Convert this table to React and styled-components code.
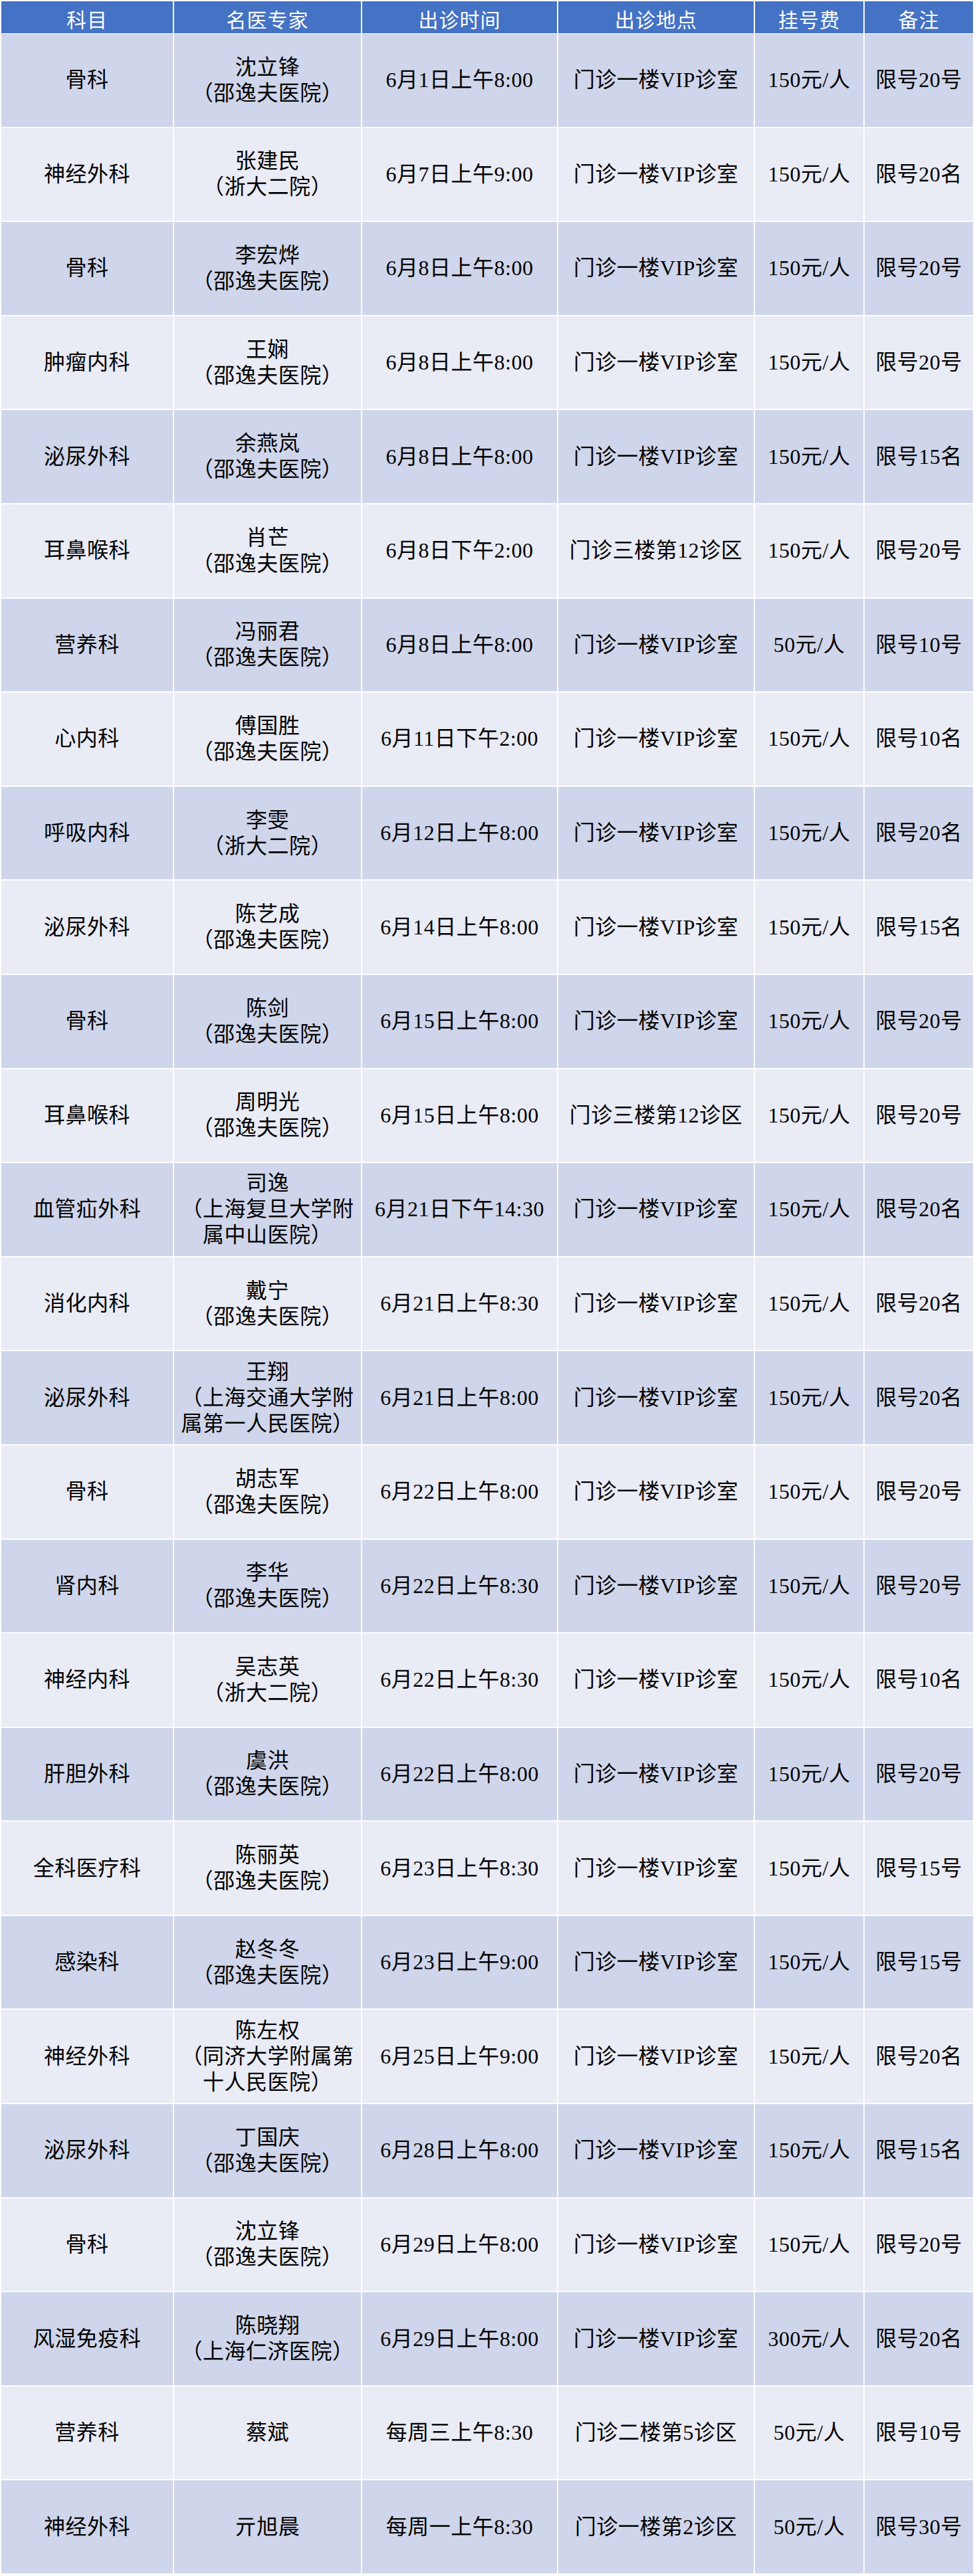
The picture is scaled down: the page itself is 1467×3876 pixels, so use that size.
import React from "react";
import styled, { createGlobalStyle } from "styled-components";

const GlobalStyle = createGlobalStyle`
  html, body {
    margin: 0;
    padding: 0;
    background: #ffffff;
  }
`;

const COLS = "258px 281px 293px 294px 163px 163px";

const Sheet = styled.div`
  width: 1467px;
  box-sizing: border-box;
  padding: 2px 3px 3px 2px;
  background: #ffffff;
`;

const HeaderRow = styled.div`
  display: grid;
  grid-template-columns: ${COLS};
  column-gap: 2px;
  height: 44px;
  margin-bottom: 5px;
`;

const HeadCell = styled.div`
  display: flex;
  align-items: center;
  justify-content: center;
  padding-top: 4px;
  box-sizing: border-box;
  background: #4472c4;
  color: #ffffff;
  font-family: "Noto Sans CJK SC", sans-serif;
  font-size: 30px;
  letter-spacing: 1px;
`;

const Body = styled.div`
  display: flex;
  flex-direction: column;
  gap: 2px;
`;

const Row = styled.div`
  display: grid;
  grid-template-columns: ${COLS};
  column-gap: 2px;
  height: 139.6px;
`;

const Cell = styled.div`
  display: flex;
  flex-direction: column;
  align-items: center;
  justify-content: center;
  background: ${(p) => (p.$band ? "#cfd5ea" : "#e9ebf5")};
  color: #000000;
  font-family: "Liberation Serif", "Noto Sans CJK SC", serif;
  font-size: 32px;
  letter-spacing: 0.5px;
  line-height: 39px;
  text-align: center;
  white-space: nowrap;
`;

const Line = styled.span`
  display: block;
`;

const SYF = "（邵逸夫医院）";
const ZD = "（浙大二院）";
const VIP = "门诊一楼VIP诊室";

const rows = [
  ["骨科", ["沈立锋", SYF], "6月1日上午8:00", VIP, "150元/人", "限号20号"],
  ["神经外科", ["张建民", ZD], "6月7日上午9:00", VIP, "150元/人", "限号20名"],
  ["骨科", ["李宏烨", SYF], "6月8日上午8:00", VIP, "150元/人", "限号20号"],
  ["肿瘤内科", ["王娴", SYF], "6月8日上午8:00", VIP, "150元/人", "限号20号"],
  ["泌尿外科", ["余燕岚", SYF], "6月8日上午8:00", VIP, "150元/人", "限号15名"],
  ["耳鼻喉科", ["肖芒", SYF], "6月8日下午2:00", "门诊三楼第12诊区", "150元/人", "限号20号"],
  ["营养科", ["冯丽君", SYF], "6月8日上午8:00", VIP, "50元/人", "限号10号"],
  ["心内科", ["傅国胜", SYF], "6月11日下午2:00", VIP, "150元/人", "限号10名"],
  ["呼吸内科", ["李雯", ZD], "6月12日上午8:00", VIP, "150元/人", "限号20名"],
  ["泌尿外科", ["陈艺成", SYF], "6月14日上午8:00", VIP, "150元/人", "限号15名"],
  ["骨科", ["陈剑", SYF], "6月15日上午8:00", VIP, "150元/人", "限号20号"],
  ["耳鼻喉科", ["周明光", SYF], "6月15日上午8:00", "门诊三楼第12诊区", "150元/人", "限号20号"],
  ["血管疝外科", ["司逸", "（上海复旦大学附", "属中山医院）"], "6月21日下午14:30", VIP, "150元/人", "限号20名"],
  ["消化内科", ["戴宁", SYF], "6月21日上午8:30", VIP, "150元/人", "限号20名"],
  ["泌尿外科", ["王翔", "（上海交通大学附", "属第一人民医院）"], "6月21日上午8:00", VIP, "150元/人", "限号20名"],
  ["骨科", ["胡志军", SYF], "6月22日上午8:00", VIP, "150元/人", "限号20号"],
  ["肾内科", ["李华", SYF], "6月22日上午8:30", VIP, "150元/人", "限号20号"],
  ["神经内科", ["吴志英", ZD], "6月22日上午8:30", VIP, "150元/人", "限号10名"],
  ["肝胆外科", ["虞洪", SYF], "6月22日上午8:00", VIP, "150元/人", "限号20号"],
  ["全科医疗科", ["陈丽英", SYF], "6月23日上午8:30", VIP, "150元/人", "限号15号"],
  ["感染科", ["赵冬冬", SYF], "6月23日上午9:00", VIP, "150元/人", "限号15号"],
  ["神经外科", ["陈左权", "（同济大学附属第", "十人民医院）"], "6月25日上午9:00", VIP, "150元/人", "限号20名"],
  ["泌尿外科", ["丁国庆", SYF], "6月28日上午8:00", VIP, "150元/人", "限号15名"],
  ["骨科", ["沈立锋", SYF], "6月29日上午8:00", VIP, "150元/人", "限号20号"],
  ["风湿免疫科", ["陈晓翔", "（上海仁济医院）"], "6月29日上午8:00", VIP, "300元/人", "限号20名"],
  ["营养科", ["蔡斌"], "每周三上午8:30", "门诊二楼第5诊区", "50元/人", "限号10号"],
  ["神经外科", ["亓旭晨"], "每周一上午8:30", "门诊一楼第2诊区", "50元/人", "限号30号"],
];

const headers = ["科目", "名医专家", "出诊时间", "出诊地点", "挂号费", "备注"];

export default function App() {
  return (
    <>
      <GlobalStyle />
      <Sheet>
        <HeaderRow>
          {headers.map((h) => (
            <HeadCell key={h}>{h}</HeadCell>
          ))}
        </HeaderRow>
        <Body>
          {rows.map(([dept, doctor, time, place, fee, note], i) => {
            const band = i % 2 === 0;
            return (
              <Row key={i}>
                <Cell $band={band}>{dept}</Cell>
                <Cell $band={band}>
                  {doctor.map((l) => (
                    <Line key={l}>{l}</Line>
                  ))}
                </Cell>
                <Cell $band={band}>{time}</Cell>
                <Cell $band={band}>{place}</Cell>
                <Cell $band={band}>{fee}</Cell>
                <Cell $band={band}>{note}</Cell>
              </Row>
            );
          })}
        </Body>
      </Sheet>
    </>
  );
}
